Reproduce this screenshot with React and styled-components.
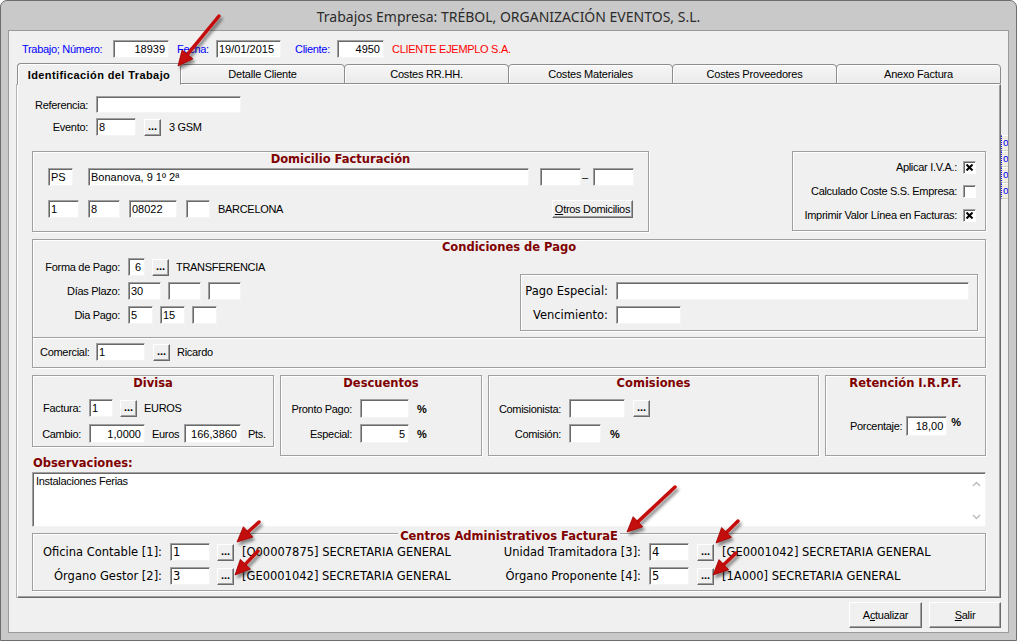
import React from "react";
import styled, { createGlobalStyle } from "styled-components";

const SANS = `"Liberation Sans", Arial, sans-serif`;
const VERD = `"DejaVu Sans", Verdana, sans-serif`;
const UI = `"Noto Sans", "Open Sans", sans-serif`;

const GlobalStyle = createGlobalStyle`
  *, *::before, *::after { box-sizing: border-box; }
  html, body { margin: 0; padding: 0; background: #ffffff; }
  body { font-family: ${SANS}; font-size: 11px; color: #000; }
`;

/* ---------- window chrome ---------- */

const Window = styled.div`
  position: relative;
  width: 1017px;
  height: 641px;
  display: flex;
  flex-direction: column;
  padding: 0 7px 7px;
  background: #c9c9c9;
  border: 1px solid #6e6e6e;
  border-radius: 7px 7px 0 0;
`;

const TitleBar = styled.div`
  height: 29px;
  flex: none;
  display: flex;
  align-items: center;
  justify-content: center;
  padding-top: 1px;
  font: 14px ${UI};
  color: #2b2b2b;
`;

const Client = styled.div`
  height: 603px;
  flex: none;
  display: flex;
  padding-left: 8px;
  background: #f0f0f0;
  border: 1px solid #9a9a9a;
`;

const Main = styled.div`
  width: 984px;
  flex: none;
  display: flex;
  flex-direction: column;
`;

const SideStrip = styled.div`
  flex: 1;
  display: flex;
  flex-direction: column;
  padding-top: 104px;
  overflow: hidden;
`;

const SideCell = styled.div`
  height: 16px;
  padding-left: 1px;
  background: #eeeddf;
  border-top: 1px solid #ffffff;
  border-bottom: 1px solid #d6d5c8;
  border-left: 1px dotted #0000ff;
  font: 10px ${SANS};
  line-height: 14px;
  color: #0000ff;
`;

/* ---------- generic form parts ---------- */

const Header = styled.div`
  display: flex;
  align-items: center;
  height: 18px;
  margin-top: 9px;
`;

const Text = styled.span`
  flex: none;
  display: inline-block;
  width: ${(p) => (p.$w ? `${p.$w}px` : "auto")};
  margin-left: ${(p) => p.$ml || 0}px;
  font: ${(p) => (p.$verd ? `11.5px ${VERD}` : `11px ${SANS}`)};
  letter-spacing: ${(p) => (p.$verd ? "0" : "-0.3px")};
  color: ${(p) => p.$color || "#000"};
  text-align: ${(p) => (p.$right ? "right" : "left")};
  white-space: nowrap;
`;

const TextBox = styled.div`
  flex: none;
  width: ${(p) => p.$w}px;
  height: ${(p) => p.$h || 18}px;
  margin-left: ${(p) => p.$ml || 0}px;
  padding: 0 3px 0 2px;
  background: #ffffff;
  border: 1px solid;
  border-color: #a0a0a0 #f4f4f4 #f4f4f4 #a0a0a0;
  box-shadow: inset 1px 1px 0 #696969;
  font: ${(p) => (p.$verd ? `11.5px ${VERD}` : `11px ${SANS}`)};
  line-height: ${(p) => (p.$h || 18) - 1}px;
  text-align: ${(p) => (p.$right ? "right" : "left")};
  white-space: nowrap;
  overflow: hidden;
`;

const Dots = styled.span`
  flex: none;
  width: 17px;
  height: 17px;
  margin-left: ${(p) => p.$ml || 0}px;
  background: #f0f0f0;
  border: 1px solid;
  border-color: #ffffff #696969 #696969 #ffffff;
  box-shadow: inset -1px -1px 0 #a0a0a0;
  font: bold 11px ${SANS};
  line-height: 12px;
  text-align: center;
`;

const PushButton = styled.div`
  flex: none;
  width: ${(p) => p.$w}px;
  height: ${(p) => p.$h}px;
  display: flex;
  align-items: center;
  justify-content: center;
  background: #f0f0f0;
  border: 1px solid;
  border-color: #ffffff #696969 #696969 #ffffff;
  box-shadow: inset -1px -1px 0 #a0a0a0;
  font: 11px ${SANS};
  letter-spacing: -0.3px;
  white-space: nowrap;
  & u { text-decoration: underline; }
`;

const OtrosButton = styled(PushButton)`
  margin-left: auto;
  margin-top: -1px;
`;

const Pct = styled.span`
  flex: none;
  margin-left: ${(p) => p.$ml || 0}px;
  align-self: ${(p) => (p.$raised ? "flex-start" : "center")};
  font: bold 11px ${SANS};
`;

const Row = styled.div`
  display: flex;
  align-items: center;
  height: ${(p) => p.$h || 18}px;
  margin-top: ${(p) => p.$mt || 0}px;
  padding-left: ${(p) => p.$pl || 0}px;
  justify-content: ${(p) => (p.$center ? "center" : "flex-start")};
`;

const Spread = styled.div`
  display: flex;
  align-items: flex-start;
  justify-content: space-between;
  margin-top: ${(p) => p.$mt || 0}px;
`;

const Column = styled.div`
  display: flex;
  flex-direction: column;
  gap: 6px;
  padding-left: ${(p) => p.$pl || 0}px;
`;

/* etched group frame */
const Box = styled.div`
  flex: none;
  position: relative;
  width: ${(p) => (p.$w ? `${p.$w}px` : "auto")};
  height: ${(p) => p.$h}px;
  margin-top: ${(p) => p.$mt || 0}px;
  padding: ${(p) => p.$pad || "0"};
  display: flex;
  flex-direction: column;
  border: 1px solid #a0a0a0;
  box-shadow: inset 1px 1px 0 #ffffff, 1px 1px 0 #ffffff;
`;

const GroupTitle = styled.div`
  font: bold 11.5px ${VERD};
  line-height: 14px;
  color: #800000;
  text-align: center;
  white-space: nowrap;
`;

const Legend = styled(GroupTitle)`
  align-self: center;
  margin-top: -5px;
  padding: 0 2px;
  background: #f0f0f0;
`;

const PayBody = styled.div`
  display: flex;
  align-items: flex-start;
  margin-top: 4px;
`;

const SubBox = styled(Box)`
  margin-left: auto;
  margin-right: 7px;
  margin-top: 16px;
  padding-top: 7px;
  gap: 6px;
`;

const CheckRow = styled.div`
  height: 24px;
  display: flex;
  align-items: center;
  justify-content: flex-end;
  gap: 6px;
`;

const CheckSquare = styled.span`
  flex: none;
  width: 13px;
  height: 13px;
  display: flex;
  align-items: center;
  justify-content: center;
  background: #ffffff;
  border: 1px solid;
  border-color: #a0a0a0 #ffffff #ffffff #a0a0a0;
  box-shadow: inset 1px 1px 0 #696969;
`;

const GroupsRow = styled.div`
  display: flex;
  align-items: flex-start;
  gap: 6px;
  margin-top: 7px;
`;

const SectionLabel = styled.div`
  font: bold 11.5px ${VERD};
  line-height: 14px;
  color: #800000;
  margin-left: 1px;
`;

const Memo = styled.div`
  height: 55px;
  margin-top: 2px;
  display: flex;
  background: #ffffff;
  border: 1px solid;
  border-color: #a0a0a0 #f4f4f4 #f4f4f4 #a0a0a0;
  box-shadow: inset 1px 1px 0 #696969;
`;

const MemoText = styled.div`
  flex: 1;
  padding: 2px 3px;
  font: 11px ${SANS};
  letter-spacing: -0.3px;
  line-height: 13px;
`;

const MemoScroll = styled.div`
  width: 17px;
  flex: none;
  display: flex;
  flex-direction: column;
  justify-content: space-between;
  align-items: center;
  padding: 8px 0 6px;
`;

const Half = styled.div`
  flex: none;
  display: flex;
  align-items: center;
  width: ${(p) => (p.$w ? `${p.$w}px` : "auto")};
`;

const Panel = styled.div`
  height: 514px;
  flex: none;
  display: flex;
  flex-direction: column;
  padding: 0 14px;
  background: #f0f0f0;
  border: 1px solid;
  border-color: #ffffff #696969 #696969 #ffffff;
  box-shadow: inset -1px -1px 0 #a0a0a0, -1px 0 0 #b4b4b4;
`;

const TabStrip = styled.div`
  position: relative;
  z-index: 1;
  display: flex;
  align-items: flex-end;
  height: 21px;
  margin-top: 5px;
`;

const Tab = styled.div`
  flex: none;
  width: ${(p) => p.$w}px;
  height: ${(p) => (p.$active ? 22 : 20)}px;
  margin-left: ${(p) => (p.$first ? 0 : -1)}px;
  margin-bottom: ${(p) => (p.$active ? -1 : 0)}px;
  display: flex;
  align-items: center;
  justify-content: center;
  background: ${(p) => (p.$active ? "#f0f0f0" : "linear-gradient(#f6f6f6, #ebebeb)")};
  border: 1px solid #8d8d8d;
  border-bottom-color: ${(p) => (p.$active ? "transparent" : "#8d8d8d")};
  border-radius: 4px 4px 0 0;
  box-shadow: inset 1px 1px 0 #ffffff;
  font: ${(p) => (p.$active ? "bold " : "")}11px ${SANS};
  letter-spacing: ${(p) => (p.$active ? "0.4px" : "-0.2px")};
  padding-top: ${(p) => (p.$active ? 1 : 0)}px;
`;

const ButtonBar = styled.div`
  display: flex;
  justify-content: flex-end;
  gap: 7px;
  margin-top: 4px;
`;

const Overlay = styled.svg`
  position: absolute;
  left: -1px;
  top: -1px;
  pointer-events: none;
  z-index: 5;
`;

/* ---------- small drawings ---------- */

function Check({ on }) {
  return (
    <CheckSquare>
      {on && (
        <svg width="7" height="7" viewBox="0 0 7 7">
          <path d="M0.5 0.5 L6.5 6.5 M6.5 0.5 L0.5 6.5" stroke="#000" strokeWidth="2" />
        </svg>
      )}
    </CheckSquare>
  );
}

function Chevron({ up }) {
  return (
    <svg width="9" height="6" viewBox="0 0 9 6">
      <path
        d={up ? "M1 5 L4.5 1.5 L8 5" : "M1 1 L4.5 4.5 L8 1"}
        fill="none"
        stroke="#bcbcbc"
        strokeWidth="1.5"
      />
    </svg>
  );
}

function Arrow({ x1, y1, x2, y2 }) {
  const dx = x2 - x1;
  const dy = y2 - y1;
  const len = Math.hypot(dx, dy);
  const ux = dx / len;
  const uy = dy / len;
  const hl = 15;
  const hw = 7;
  const bx = x2 - ux * hl;
  const by = y2 - uy * hl;
  const px = -uy;
  const py = ux;
  const head = `${x2},${y2} ${bx + px * hw},${by + py * hw} ${bx - px * hw},${by - py * hw}`;
  return (
    <g filter="url(#arrowShadow)">
      <line x1={x1} y1={y1} x2={bx + ux * 2} y2={by + uy * 2} stroke="#c40a0a" strokeWidth="3.5" strokeLinecap="round" />
      <polygon points={head} fill="#c40a0a" stroke="#a00000" strokeWidth="0.8" strokeLinejoin="round" />
    </g>
  );
}

const arrows = [
  { x1: 219, y1: 16, x2: 178, y2: 66 },
  { x1: 675, y1: 487, x2: 627, y2: 532 },
  { x1: 259, y1: 522, x2: 237, y2: 542 },
  { x1: 258, y1: 551, x2: 235, y2: 575 },
  { x1: 738, y1: 521, x2: 716, y2: 543 },
  { x1: 736, y1: 553, x2: 713, y2: 575 },
];

const tabs = [
  { label: "Detalle Cliente" },
  { label: "Costes RR.HH." },
  { label: "Costes Materiales" },
  { label: "Costes Proveedores" },
  { label: "Anexo Factura" },
];

const centros = [
  [
    { label: "Oficina Contable [1]:", value: "1", text: "[O00007875] SECRETARIA GENERAL" },
    { label: "Unidad Tramitadora [3]:", value: "4", text: "[GE0001042] SECRETARIA GENERAL" },
  ],
  [
    { label: "Órgano Gestor [2]:", value: "3", text: "[GE0001042] SECRETARIA GENERAL" },
    { label: "Órgano Proponente [4]:", value: "5", text: "[1A000] SECRETARIA GENERAL" },
  ],
];

export default function App() {
  return (
    <>
      <GlobalStyle />
      <Window>
        <TitleBar>Trabajos Empresa: TRÉBOL, ORGANIZACIÓN EVENTOS, S.L.</TitleBar>
        <Client>
          <Main>
            <Header>
              <Text $color="#0000ff" $w={91} $ml={5}>Trabajo; Número:</Text>
              <TextBox $w={56} $right>18939</TextBox>
              <Text $color="#0000ff" $w={39} $ml={8}>Fecha:</Text>
              <TextBox $w={65}>19/01/2015</TextBox>
              <Text $color="#0000ff" $w={42} $ml={14}>Cliente:</Text>
              <TextBox $w={47} $right>4950</TextBox>
              <Text $color="#ff0000" $ml={8}>CLIENTE EJEMPLO S.A.</Text>
            </Header>

            <TabStrip>
              <Tab $active $first $w={164}>Identificación del Trabajo</Tab>
              {tabs.map((t) => (
                <Tab key={t.label} $w={165}>{t.label}</Tab>
              ))}
            </TabStrip>

            <Panel>
              <Row $mt={11} $h={17}>
                <Text $w={56} $right>Referencia:</Text>
                <TextBox $w={145} $h={17} $ml={8} />
              </Row>
              <Row $mt={5}>
                <Text $w={56} $right>Evento:</Text>
                <TextBox $w={40} $ml={8}>8</TextBox>
                <Dots $ml={8}>...</Dots>
                <Text $ml={8}>3 GSM</Text>
              </Row>

              <Spread $mt={15}>
                <Box $w={617} $h={81}>
                  <GroupTitle>Domicilio Facturación</GroupTitle>
                  <Row $mt={2} $pl={15}>
                    <TextBox $w={25}>PS</TextBox>
                    <TextBox $w={441} $ml={15}>Bonanova, 9 1º 2ª</TextBox>
                    <TextBox $w={41} $ml={11} />
                    <Text $w={11} $ml={1}>–</Text>
                    <TextBox $w={41} />
                  </Row>
                  <Row $mt={14} $pl={15}>
                    <TextBox $w={31}>1</TextBox>
                    <TextBox $w={32} $ml={9}>8</TextBox>
                    <TextBox $w={48} $ml={9}>08022</TextBox>
                    <TextBox $w={24} $ml={9} />
                    <Text $ml={8}>BARCELONA</Text>
                    <OtrosButton $w={81} $h={18}>
                      <span><u>O</u>tros Domicilios</span>
                    </OtrosButton>
                    <Text $w={15} />
                  </Row>
                </Box>

                <Box $w={194} $h={80} $mt={0} $pad="3px 9px 0 0">
                  <CheckRow>
                    <Text>Aplicar I.V.A.:</Text>
                    <Check on />
                  </CheckRow>
                  <CheckRow>
                    <Text>Calculado Coste S.S. Empresa:</Text>
                    <Check />
                  </CheckRow>
                  <CheckRow>
                    <Text>Imprimir Valor Línea en Facturas:</Text>
                    <Check on />
                  </CheckRow>
                </Box>
              </Spread>

              <Box $mt={7} $h={99}>
                <GroupTitle>Condiciones de Pago</GroupTitle>
                <PayBody>
                  <Column $pl={7}>
                    <Row>
                      <Text $w={80} $right>Forma de Pago:</Text>
                      <TextBox $w={17} $ml={8} $right>6</TextBox>
                      <Dots $ml={7}>...</Dots>
                      <Text $ml={7}>TRANSFERENCIA</Text>
                    </Row>
                    <Row>
                      <Text $w={80} $right>Días Plazo:</Text>
                      <TextBox $w={33} $ml={8}>30</TextBox>
                      <TextBox $w={33} $ml={7} />
                      <TextBox $w={33} $ml={7} />
                    </Row>
                    <Row>
                      <Text $w={80} $right>Dia Pago:</Text>
                      <TextBox $w={25} $ml={8}>5</TextBox>
                      <TextBox $w={25} $ml={7}>15</TextBox>
                      <TextBox $w={25} $ml={7} />
                    </Row>
                  </Column>
                  <SubBox $w={458} $h={57}>
                    <Row>
                      <Text $verd $w={87} $right>Pago Especial:</Text>
                      <TextBox $w={353} $ml={8} $verd />
                    </Row>
                    <Row>
                      <Text $verd $w={87} $right>Vencimiento:</Text>
                      <TextBox $w={65} $ml={8} $verd />
                    </Row>
                  </SubBox>
                </PayBody>
              </Box>

              <Box $mt={-1} $h={31} $pad="5px 0 0 7px">
                <Row>
                  <Text $w={48}>Comercial:</Text>
                  <TextBox $w={49} $ml={8}>1</TextBox>
                  <Dots $ml={8}>...</Dots>
                  <Text $ml={7}>Ricardo</Text>
                </Row>
              </Box>

              <GroupsRow>
                <Box $w={242} $h={72}>
                  <GroupTitle>Divisa</GroupTitle>
                  <Row $mt={9} $pl={9}>
                    <Text $w={39} $right>Factura:</Text>
                    <TextBox $w={24} $ml={8}>1</TextBox>
                    <Dots $ml={7}>...</Dots>
                    <Text $ml={7}>EUROS</Text>
                  </Row>
                  <Row $mt={7} $pl={9} $h={19}>
                    <Text $w={39} $right>Cambio:</Text>
                    <TextBox $w={56} $h={19} $ml={8} $right>1,0000</TextBox>
                    <Text $w={32} $ml={7}>Euros</Text>
                    <TextBox $w={57} $h={19} $right>166,3860</TextBox>
                    <Text $ml={7}>Pts.</Text>
                  </Row>
                </Box>

                <Box $w={202} $h={81}>
                  <GroupTitle>Descuentos</GroupTitle>
                  <Row $mt={9} $pl={9} $h={19}>
                    <Text $w={62} $right>Pronto Pago:</Text>
                    <TextBox $w={49} $h={19} $ml={8} $right />
                    <Pct $ml={8}>%</Pct>
                  </Row>
                  <Row $mt={6} $pl={9} $h={19}>
                    <Text $w={62} $right>Especial:</Text>
                    <TextBox $w={49} $h={19} $ml={8} $right>5</TextBox>
                    <Pct $ml={8}>%</Pct>
                  </Row>
                </Box>

                <Box $w={331} $h={81}>
                  <GroupTitle>Comisiones</GroupTitle>
                  <Row $mt={9} $pl={9} $h={19}>
                    <Text $w={63} $right>Comisionista:</Text>
                    <TextBox $w={56} $h={19} $ml={8} />
                    <Dots $ml={8}>...</Dots>
                  </Row>
                  <Row $mt={6} $pl={9} $h={19}>
                    <Text $w={63} $right>Comisión:</Text>
                    <TextBox $w={32} $h={19} $ml={8} />
                    <Pct $ml={9}>%</Pct>
                  </Row>
                </Box>

                <Box $w={161} $h={81}>
                  <GroupTitle>Retención I.R.P.F.</GroupTitle>
                  <Row $mt={26} $h={20} $center>
                    <Text>Porcentaje:</Text>
                    <TextBox $w={41} $h={20} $ml={4} $right>18,00</TextBox>
                    <Pct $ml={4} $raised>%</Pct>
                  </Row>
                </Box>
              </GroupsRow>

              <SectionLabel>Observaciones:</SectionLabel>
              <Memo>
                <MemoText>Instalaciones Ferias</MemoText>
                <MemoScroll>
                  <Chevron up />
                  <Chevron />
                </MemoScroll>
              </Memo>

              <Box $mt={6} $h={58}>
                <Legend>Centros Administrativos FacturaE</Legend>
                {centros.map((line, i) => (
                  <Row key={i} $mt={i === 0 ? 0 : 6} $pl={9}>
                    <Half $w={457}>
                      <Text $verd $w={120} $right>{line[0].label}</Text>
                      <TextBox $verd $w={40} $ml={8}>{line[0].value}</TextBox>
                      <Dots $ml={7}>...</Dots>
                      <Text $verd $ml={8}>{line[0].text}</Text>
                    </Half>
                    <Half>
                      <Text $verd $w={142} $right>{line[1].label}</Text>
                      <TextBox $verd $w={40} $ml={8}>{line[1].value}</TextBox>
                      <Dots $ml={8}>...</Dots>
                      <Text $verd $ml={8}>{line[1].text}</Text>
                    </Half>
                  </Row>
                ))}
              </Box>
            </Panel>

            <ButtonBar>
              <PushButton $w={73} $h={26}>
                <span>A<u>c</u>tualizar</span>
              </PushButton>
              <PushButton $w={72} $h={26}>
                <span><u>S</u>alir</span>
              </PushButton>
            </ButtonBar>
          </Main>

          <SideStrip>
            <SideCell>o</SideCell>
            <SideCell>o</SideCell>
            <SideCell>o</SideCell>
            <SideCell>o</SideCell>
          </SideStrip>
        </Client>

        <Overlay width="1017" height="641" viewBox="0 0 1017 641">
          <defs>
            <filter id="arrowShadow" x="-50%" y="-50%" width="200%" height="200%">
              <feDropShadow dx="2" dy="3" stdDeviation="1.8" floodColor="#000" floodOpacity="0.45" />
            </filter>
          </defs>
          {arrows.map((a, i) => (
            <Arrow key={i} {...a} />
          ))}
        </Overlay>
      </Window>
    </>
  );
}
